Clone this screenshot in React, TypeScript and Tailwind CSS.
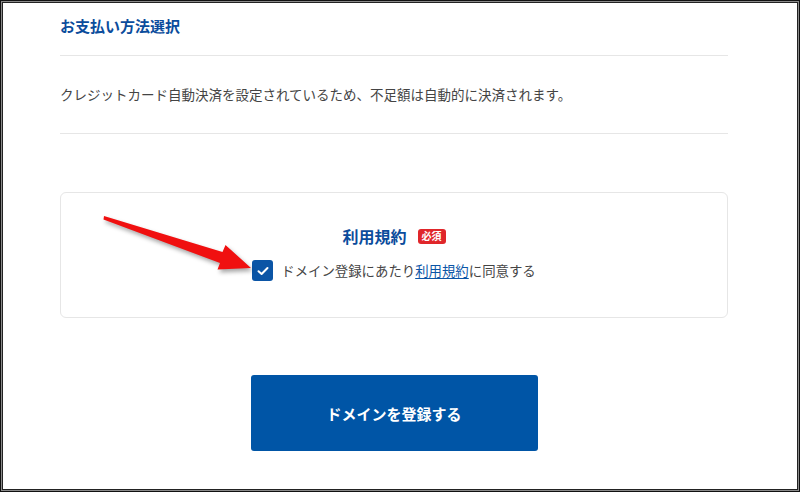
import React from "react";

export default function App() {
  const font = { fontFamily: '"Noto Sans CJK JP", "Noto Sans", sans-serif' };
  return (
    <div className="w-[800px] h-[492px] bg-white" style={font}>
      <div className="w-full h-full border border-[#111]">
        <div className="w-full h-full border border-[#8a8a8a]">
          <div className="relative w-full h-full border border-[#222] bg-white">
            <div className="ml-[57px] w-[668px] flex flex-col">
              <div className="mt-[11px] h-[22px] flex items-center text-[15px] font-bold text-[#0b4c9c] leading-none">
                お支払い方法選択
              </div>
              <div className="mt-[19px] h-px bg-[#e6e6e6]" />
              <div className="mt-[29px] h-[20px] flex items-center text-[13.5px] text-[#444] leading-none">
                クレジットカード自動決済を設定されているため、不足額は自動的に決済されます。
              </div>
              <div className="mt-[28px] h-px bg-[#e6e6e6]" />
              <div className="mt-[58px] h-[126px] rounded-[6px] border border-[#e6e6e6] flex flex-col items-center">
                <div className="mt-[35px] h-[16px] flex items-center gap-[11px]">
                  <span className="text-[16px] font-bold text-[#0b4c9c] leading-none">利用規約</span>
                  <span className="bg-[#e0262a] text-white text-[10px] font-bold leading-none h-[15px] w-[28px] flex items-center justify-center rounded-[3px]">必須</span>
                </div>
                <div className="mt-[16px] flex items-center gap-[8px]">
                  <div className="w-[21px] h-[21px] rounded-[3px] bg-[#0b55a6] flex items-center justify-center">
                    <svg width="12" height="10" viewBox="0 0 12 10">
                      <path d="M1.5 5.2 L4.6 8 L10.5 2" stroke="white" strokeWidth="2" fill="none" strokeLinecap="round" strokeLinejoin="round" />
                    </svg>
                  </div>
                  <span className="text-[13.4px] text-[#444] leading-none">
                    ドメイン登録にあたり<span className="text-[#0b55a6] underline underline-offset-2">利用規約</span>に同意する
                  </span>
                </div>
              </div>
              <div className="mt-[57px] flex justify-center">
                <button className="w-[287px] h-[76px] rounded-[3px] bg-[#0055a6] text-white text-[15px] font-bold leading-none">
                  ドメインを登録する
                </button>
              </div>
            </div>
            <svg className="absolute left-0 top-0 pointer-events-none" width="800" height="492" viewBox="0 0 800 492" style={{ filter: "drop-shadow(2px 3px 2px rgba(0,0,0,0.35))" }}>
              <polygon
                transform="translate(-3,-3)"
                points="104,216 222.5,252 225.5,245 251,268 217.5,269.5 220,263 103.5,219.5"
                fill="#f01010"
              />
            </svg>
          </div>
        </div>
      </div>
    </div>
  );
}
